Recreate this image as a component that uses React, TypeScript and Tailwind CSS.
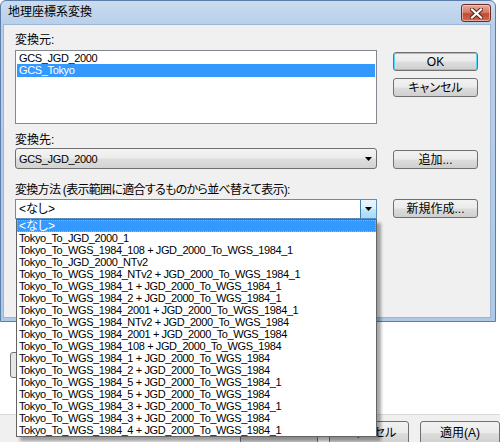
import React from "react";

const FONT = "font-['Liberation_Sans','Noto_Sans_CJK_JP',sans-serif] [font-feature-settings:'palt']";

const btn =
  "flex items-center justify-center h-[19px] w-[85px] rounded-[3px] border border-[#707070] bg-[linear-gradient(#f2f2f2_0%,#ebebeb_48%,#dddddd_52%,#cfcfcf_100%)] text-[12px] leading-[12px] text-black";

const items = [
  "<なし>",
  "Tokyo_To_JGD_2000_1",
  "Tokyo_To_WGS_1984_108 + JGD_2000_To_WGS_1984_1",
  "Tokyo_To_JGD_2000_NTv2",
  "Tokyo_To_WGS_1984_NTv2 + JGD_2000_To_WGS_1984_1",
  "Tokyo_To_WGS_1984_1 + JGD_2000_To_WGS_1984_1",
  "Tokyo_To_WGS_1984_2 + JGD_2000_To_WGS_1984_1",
  "Tokyo_To_WGS_1984_2001 + JGD_2000_To_WGS_1984_1",
  "Tokyo_To_WGS_1984_NTv2 + JGD_2000_To_WGS_1984",
  "Tokyo_To_WGS_1984_2001 + JGD_2000_To_WGS_1984",
  "Tokyo_To_WGS_1984_108 + JGD_2000_To_WGS_1984",
  "Tokyo_To_WGS_1984_1 + JGD_2000_To_WGS_1984",
  "Tokyo_To_WGS_1984_2 + JGD_2000_To_WGS_1984",
  "Tokyo_To_WGS_1984_5 + JGD_2000_To_WGS_1984_1",
  "Tokyo_To_WGS_1984_5 + JGD_2000_To_WGS_1984",
  "Tokyo_To_WGS_1984_3 + JGD_2000_To_WGS_1984_1",
  "Tokyo_To_WGS_1984_3 + JGD_2000_To_WGS_1984",
  "Tokyo_To_WGS_1984_4 + JGD_2000_To_WGS_1984_1",
];

function Arrow() {
  return (
    <svg width="7" height="4" viewBox="0 0 7 4">
      <path d="M0 0H7L3.5 4Z" fill="#000" />
    </svg>
  );
}

function CloseButton() {
  return (
    <div className="flex items-center justify-center w-[30px] h-[18px] rounded-[3px] border border-[#6d2b22] bg-[linear-gradient(#e9a99b_0%,#d47e6b_45%,#c24a33_55%,#d06a4e_100%)] shadow-[inset_0_0_0_1px_rgba(255,220,210,0.55)]">
      <svg width="13" height="11" viewBox="0 0 13 11">
        <path
          d="M2 1.5L11 9.5M11 1.5L2 9.5"
          stroke="#5a1e14"
          strokeWidth="4"
          strokeLinecap="square"
        />
        <path
          d="M2 1.5L11 9.5M11 1.5L2 9.5"
          stroke="#ffffff"
          strokeWidth="2.2"
          strokeLinecap="square"
        />
      </svg>
    </div>
  );
}

export default function App() {
  return (
    <div className={`relative w-[500px] h-[442px] overflow-hidden bg-white flex flex-col ${FONT}`}>
      {/* Dialog window */}
      <div className="w-[496px] h-[322px] shrink-0 flex flex-col border border-[#5d7ea8] rounded-t-[6px] bg-[linear-gradient(#c9dbf0_0px,#b8cfea_24px,#aec8e7_100%)]">
        {/* title bar */}
        <div className="h-[23px] shrink-0 flex items-start justify-between pl-[7px] pr-[4px]">
          <span className="pt-[4px] text-[12px] leading-[14px] text-black">地理座標系変換</span>
          <div className="pt-[3px]">
            <CloseButton />
          </div>
        </div>
        {/* content */}
        <div className="flex-1 ml-[2px] mr-[4px] mb-[3px] border border-[#9db6d6] bg-[#f0f0f0] flex text-[12px] leading-[14px] text-black">
          {/* left column */}
          <div className="w-[362px] ml-[11px] flex flex-col">
            <div className="mt-[8px] h-[14px]">変換元:</div>
            <div className="mt-[3px] h-[74px] border border-[#828790] bg-white p-[1px] flex flex-col text-[11px] tracking-[-0.35px]">
              <div className="h-[12px] leading-[12px] pl-[2px]">GCS_JGD_2000</div>
              <div className="h-[13px] leading-[13px] pl-[2px] bg-[#3399ff] text-white">GCS_Tokyo</div>
            </div>
            <div className="mt-[9px] h-[14px]">変換先:</div>
            <div className="mt-[1px] h-[21px] rounded-[3px] border border-[#707070] bg-[linear-gradient(#f4f4f4_0%,#ececec_48%,#dedede_52%,#d3d3d3_100%)] flex items-center justify-between pl-[3px] pr-[4px]">
              <span className="text-[11px] tracking-[-0.35px]">GCS_JGD_2000</span>
              <Arrow />
            </div>
            <div className="mt-[14px] h-[14px] whitespace-nowrap tracking-[-0.7px]">変換方法 (表示範囲に適合するものから並べ替えて表示):</div>
            <div className="mt-[2px] h-[20px] border border-[#5f8fbb] bg-white flex items-stretch">
              <span className="flex-1 pl-[3px] leading-[18px]">&lt;なし&gt;</span>
              <div className="w-[16px] border-l border-[#3c7fb1] bg-[linear-gradient(#eaf6fd_0%,#d9f0fc_48%,#bee6fd_52%,#a7d9f5_100%)] flex items-center justify-center">
                <Arrow />
              </div>
            </div>
          </div>
          {/* right column */}
          <div className="ml-[16px] flex flex-col">
            <div className={`${btn} mt-[27px] border-[#3c7fb1] shadow-[inset_0_0_0_1px_#5fd4fb]`}>OK</div>
            <div className={`${btn} mt-[7px]`}>キャンセル</div>
            <div className={`${btn} mt-[53px]`}>追加...</div>
            <div className={`${btn} mt-[30px]`}>新規作成...</div>
          </div>
        </div>
      </div>

      {/* Parent window behind */}
      <div className="flex-1 flex flex-col">
        <div className="h-[92px] bg-white pt-[30px] pl-[10px]">
          <div className="w-[90px] h-[26px] rounded-[3px] border border-[#707070] bg-[#e6e6e6]" />
        </div>
        <div className="flex-1 border-t border-[#d9d9d9] bg-[#f0f0f0] flex gap-[11px] pl-[240px] pt-[6px] text-[12px] leading-[12px]">
          <div className="w-[82px] h-[24px] rounded-[3px] border border-[#707070] bg-[linear-gradient(#f2f2f2_0%,#ebebeb_48%,#dddddd_52%,#cfcfcf_100%)]" />
          <div className="w-[84px] h-[24px] rounded-[3px] border border-[#707070] bg-[linear-gradient(#f2f2f2_0%,#ebebeb_48%,#dddddd_52%,#cfcfcf_100%)] flex items-center justify-center">キャンセル</div>
          <div className="w-[84px] h-[24px] rounded-[3px] border border-[#707070] bg-[linear-gradient(#f2f2f2_0%,#ebebeb_48%,#dddddd_52%,#cfcfcf_100%)] flex items-center justify-center">適用(A)</div>
        </div>
      </div>

      {/* Dropdown list (overlay) */}
      <div className="absolute left-[16px] top-[219px] w-[361px] border border-[#646464] bg-white shadow-[4px_4px_3px_rgba(0,0,0,0.35)] flex flex-col text-[11px] tracking-[-0.4px] text-black">
        {items.map((t, i) => (
          <div
            key={i}
            className={
              i === 0
                ? "h-[12px] leading-[12px] pl-[2px] whitespace-nowrap bg-[#3399ff] text-white text-[12px] tracking-normal outline-1 outline-dotted outline-[#e8a060] -outline-offset-1"
                : "h-[12px] leading-[12px] pl-[2px] whitespace-nowrap"
            }
          >
            {t}
          </div>
        ))}
      </div>
    </div>
  );
}
